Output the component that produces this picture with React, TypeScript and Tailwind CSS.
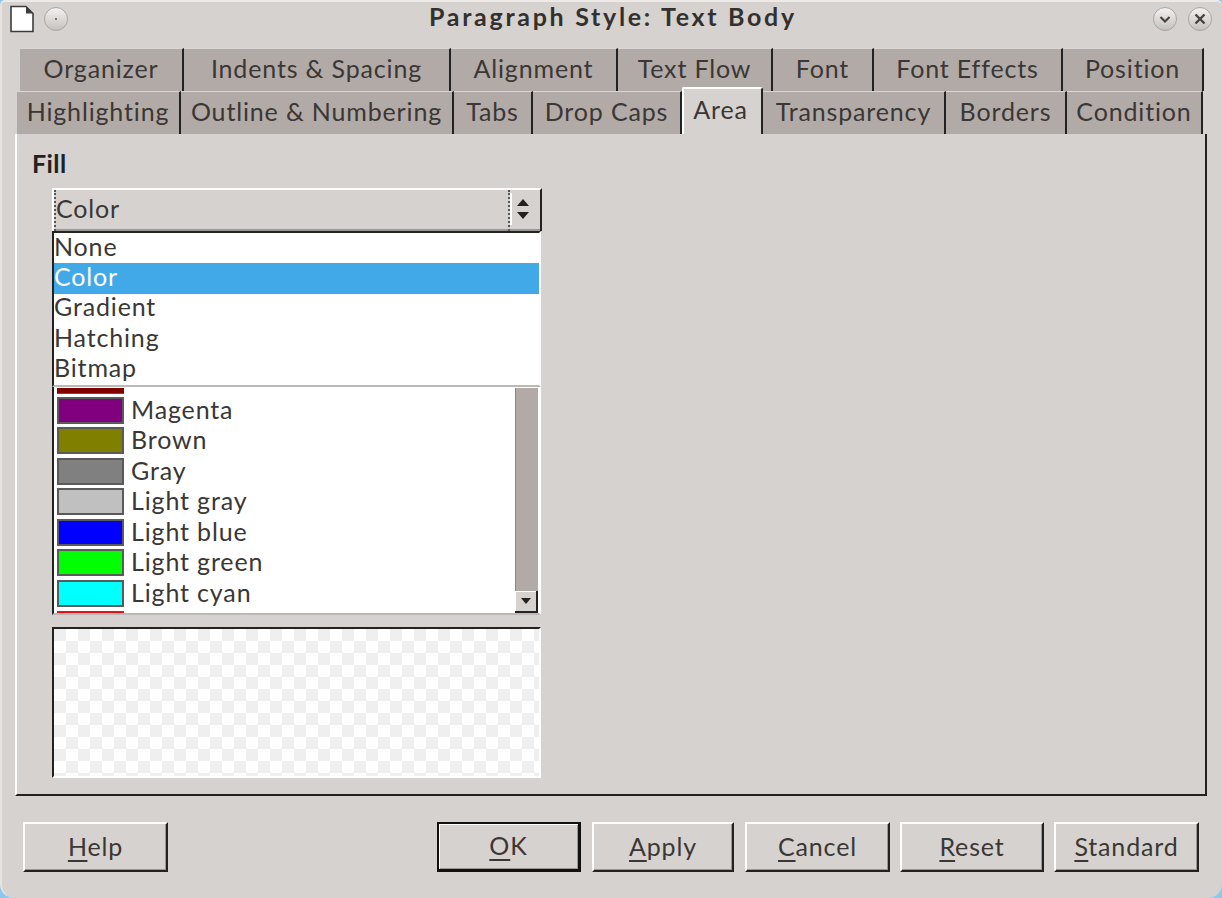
const rowOne = [
  { label: "Organizer", w: 164 },
  { label: "Indents & Spacing", w: 267 },
  { label: "Alignment", w: 167 },
  { label: "Text Flow", w: 155 },
  { label: "Font", w: 101 },
  { label: "Font Effects", w: 189 },
  { label: "Position", w: 141 },
];

const rowTwo = [
  { label: "Highlighting", w: 164 },
  { label: "Outline & Numbering", w: 273 },
  { label: "Tabs", w: 79 },
  { label: "Drop Caps", w: 149 },
  { label: "Area", w: 81, active: true },
  { label: "Transparency", w: 183 },
  { label: "Borders", w: 121 },
  { label: "Condition", w: 136 },
];

const fillTypes = ["None", "Color", "Gradient", "Hatching", "Bitmap"];

const colors = [
  { name: "Magenta", hex: "#800080" },
  { name: "Brown", hex: "#808000" },
  { name: "Gray", hex: "#808080" },
  { name: "Light gray", hex: "#c0c0c0" },
  { name: "Light blue", hex: "#0000ff" },
  { name: "Light green", hex: "#00ff00" },
  { name: "Light cyan", hex: "#00ffff" },
];

function Tab({ label, w, active }: { label: string; w: number; active?: boolean }) {
  if (active) {
    return (
      <div
        className="-mt-[4px] flex h-[47px] shrink-0 items-center justify-center rounded-t-[2px] border-t-2 border-r-2 border-l-2 border-t-white border-r-[#222] border-l-white bg-[#d6d2cf] pr-[4px] pb-[4px]"
        style={{ width: w }}
      >
        {label}
      </div>
    );
  }
  return (
    <div
      className="flex h-full shrink-0 items-center justify-center border-t border-r-2 border-t-[#d9d6d3] border-r-[#222] bg-[#b2aaa7] pb-[4px]"
      style={{ width: w }}
    >
      {label}
    </div>
  );
}

function DialogButton({
  w,
  mark,
  rest,
  primary,
  className = "",
}: {
  w: number;
  mark: string;
  rest: string;
  primary?: boolean;
  className?: string;
}) {
  return (
    <button
      className={
        (primary
          ? "flex h-[50px] shrink-0 items-center justify-center border-2 border-r-[3px] border-b-[3px] border-[#111] bg-[#d6d2cf] pb-[2px] shadow-[inset_1px_1px_0_#fff,inset_-1px_-1px_0_#9c9794] "
          : "flex h-[50px] shrink-0 items-center justify-center border-t-2 border-r-2 border-b-2 border-l-2 border-t-white border-r-[#222] border-b-[#222] border-l-white bg-[#d6d2cf] pb-[2px] shadow-[inset_-1px_-1px_0_#9c9794] ") +
        className
      }
      style={{ width: w }}
    >
      <span>
        <u className="decoration-[1.5px] underline-offset-[4px]">{mark}</u>
        {rest}
      </span>
    </button>
  );
}

function RoundButton({ children }: { children?: React.ReactNode }) {
  return (
    <svg width="26" height="26" viewBox="0 0 26 26" className="shrink-0">
      <defs>
        <linearGradient id="roundFace" x1="0" y1="0" x2="0" y2="1">
          <stop offset="0" stopColor="#f4f3f2" />
          <stop offset="1" stopColor="#c4c0bd" />
        </linearGradient>
      </defs>
      <circle cx="13" cy="13" r="11.5" fill="url(#roundFace)" stroke="#a9a5a2" />
      {children}
    </svg>
  );
}

export default function App() {
  return (
    <div
      className="h-[898px] w-[1222px] overflow-hidden bg-[#8cc8ee] text-[25px] leading-none tracking-[0.85px] text-[#3a3735]"
      style={{ fontFamily: "Lato, 'Noto Sans', sans-serif" }}
    >
      <div className="flex h-full flex-col rounded-t-[5px] rounded-b-[14px] border-t-2 border-l-2 border-t-[#ece9e7] border-l-[#e6e3e1] bg-[#d6d2cf] pr-[1px] pb-[1px]">
        {/* title bar */}
        <div className="flex h-[33px] shrink-0 items-center pr-[8px] pl-[8px]">
          <svg width="24" height="28" viewBox="0 0 24 28" className="shrink-0">
            <path d="M1 1.5h15l7 7v18H1z" fill="#fff" stroke="#3d3d3d" strokeWidth="1.6" />
            <path d="M16 1.5l7 7h-7z" fill="#3d3d3d" />
          </svg>
          <div className="ml-[9px]">
            <RoundButton>
              <circle cx="13" cy="13" r="1" fill="#555" />
            </RoundButton>
          </div>
          <div className="flex-1 pb-[4px] pl-[5px] text-center text-[25px] font-bold tracking-[2.7px] text-[#33302e]">
            Paragraph Style: Text Body
          </div>
          <RoundButton>
            <path d="M8.5 11l4.5 4.5 4.5-4.5" fill="none" stroke="#444" strokeWidth="2.2" />
          </RoundButton>
          <div className="ml-[9px]">
            <RoundButton>
              <path d="M8.5 8.5l9 9M17.5 8.5l-9 9" fill="none" stroke="#444" strokeWidth="2.4" />
            </RoundButton>
          </div>
        </div>

        {/* tabs */}
        <div className="mt-[13px] flex h-[43px] shrink-0 pl-[18px]">
          {rowOne.map((t) => (
            <Tab key={t.label} label={t.label} w={t.w} />
          ))}
        </div>
        <div className="flex h-[43px] shrink-0 pl-[15px]">
          {rowTwo.map((t) => (
            <Tab key={t.label} label={t.label} w={t.w} active={t.active} />
          ))}
        </div>

        {/* area page */}
        <div className="mr-[14px] ml-[13px] flex h-[662px] shrink-0 flex-col border-r-2 border-b-2 border-l-2 border-r-[#222] border-b-[#222] border-l-white pt-[17px] pl-[15px]">
          <div className="h-[26px] text-[25px] font-bold tracking-[0.4px] text-[#222]">Fill</div>

          <div className="mt-[11px] ml-[20px] flex w-[490px] flex-col">
            {/* combo */}
            <div className="flex h-[43px] items-center border-t-2 border-r-2 border-l-2 border-t-white border-r-[#222] border-l-white bg-[#d6d2cf] shadow-[inset_0_-2px_0_#9c9794]">
              <div className="flex h-full flex-1 items-center border-l-2 border-dotted border-l-[#555] pb-[5px]">
                Color
              </div>
              <div className="flex h-full w-[32px] shrink-0 items-center border-l-2 border-dotted border-l-[#555] pb-[3px]">
                <div className="h-[32px] w-[2px] border-l-2 border-l-white" />
                <svg width="16" height="30" viewBox="0 0 16 30" className="ml-[3px]">
                  <path d="M8 5l6 7H2z M2 18h12l-6 7z" fill="#222" />
                </svg>
              </div>
            </div>

            {/* open dropdown */}
            <div className="mr-[1px] h-[156px] border-t-2 border-r-2 border-b-2 border-l-2 border-t-[#222] border-r-white border-b-[#bdb9b6] border-l-[#222] bg-white">
              {fillTypes.map((f) => (
                <div
                  key={f}
                  className={
                    f === "Color"
                      ? "flex h-[30.4px] items-center bg-[#41a9e8] pb-[4px] text-white"
                      : "flex h-[30.4px] items-center pb-[4px]"
                  }
                >
                  {f}
                </div>
              ))}
            </div>

            {/* colour list */}
            <div className="mr-[1px] flex h-[228px] overflow-hidden border-r-2 border-b-2 border-l-2 border-r-white border-b-[#bdb9b6] border-l-[#222] bg-white pt-[1px]">
              <div className="min-w-0 flex-1 overflow-hidden pl-[3px]">
                <div className="h-[6px] w-[67px] border-b border-b-[#555] bg-[#800000]" />
                {colors.map((c) => (
                  <div key={c.name} className="flex h-[30.5px] items-center">
                    <div
                      className="mt-[2px] h-[27px] w-[67px] shrink-0 border-2 border-[#5a5a5a]"
                      style={{ backgroundColor: c.hex }}
                    />
                    <span className="ml-[7px]">{c.name}</span>
                  </div>
                ))}
                <div className="mt-[3px] h-[3px] w-[67px] border-t border-t-[#555] bg-[#e01010]" />
              </div>
              <div className="flex w-[23px] shrink-0 flex-col bg-[#b2aaa7] shadow-[inset_1px_0_0_#8a8582]">
                <div className="flex-1" />
                <div className="flex h-[22px] items-center justify-center border-r-2 border-b-2 border-r-[#222] border-b-[#222] bg-[#d6d2cf] shadow-[inset_1px_1px_0_#fff]">
                  <svg width="12" height="8" viewBox="0 0 12 8">
                    <path d="M1 1h10l-5 6z" fill="#222" />
                  </svg>
                </div>
              </div>
              <div className="w-[1px] shrink-0" />
            </div>

            {/* preview */}
            <div className="mt-[12px] mr-[1px] h-[151px] border-t-2 border-r-2 border-b-2 border-l-2 border-t-[#222] border-r-white border-b-white border-l-[#222] bg-[conic-gradient(#fff_25%,#efefef_0_50%,#fff_0_75%,#efefef_0)] [background-size:24px_24px]" />
          </div>
        </div>

        {/* buttons */}
        <div className="mt-[26px] flex items-start pr-[22px] pl-[21px]">
          <DialogButton w={145} mark="H" rest="elp" />
          <div className="flex-1" />
          <DialogButton w={144} mark="O" rest="K" primary />
          <DialogButton w={142} mark="A" rest="pply" className="ml-[11px]" />
          <DialogButton w={145} mark="C" rest="ancel" className="ml-[11px]" />
          <DialogButton w={144} mark="R" rest="eset" className="ml-[10px]" />
          <DialogButton w={145} mark="S" rest="tandard" className="ml-[10px]" />
        </div>
      </div>
    </div>
  );
}
